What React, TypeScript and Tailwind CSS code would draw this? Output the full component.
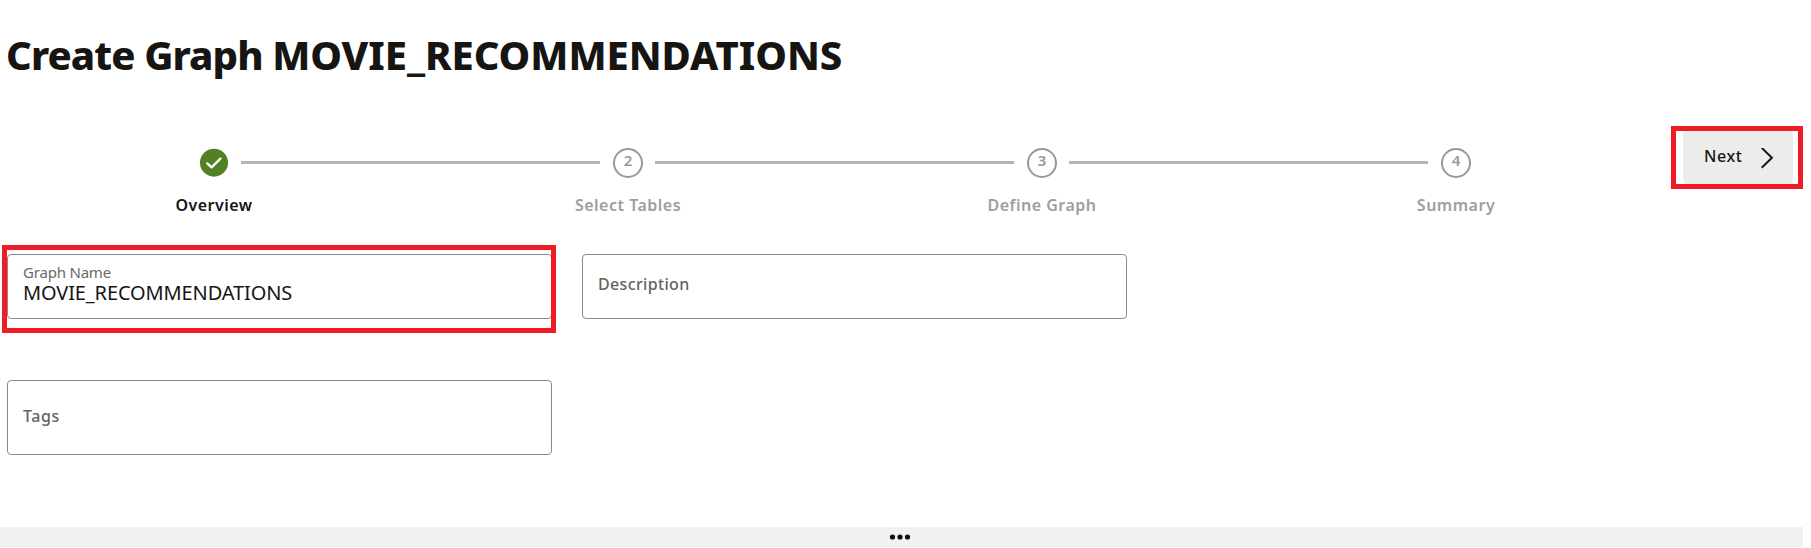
import { Fragment } from 'react';

const steps = ['Overview', 'Select Tables', 'Define Graph', 'Summary'];

function CheckBadge() {
  return (
    <svg viewBox="0 0 30 30" className="size-[30px] shrink-0">
      <circle cx="15" cy="14.7" r="14" fill="#508223" />
      <path
        d="M8.3 15.4 L12.6 19.3 L21.4 10.7"
        fill="none"
        stroke="#ffffff"
        strokeWidth="2.4"
        strokeLinecap="round"
        strokeLinejoin="round"
      />
    </svg>
  );
}

function StepTrain() {
  return (
    <div className="w-[1656px] shrink-0">
      <div className="flex items-start pl-48">
        {steps.map((step, i) => (
          <Fragment key={step}>
            {i > 0 && <div className="mt-[13px] mr-[13px] ml-3 h-[3px] w-[359px] bg-[#b5b4b3]" />}
            {i === 0 ? (
              <CheckBadge />
            ) : (
              <div className="size-[30px] shrink-0 rounded-full border-2 border-[#9b9998] text-center text-[15px] leading-5 font-semibold text-[#9b9998]">
                {i + 1}
              </div>
            )}
          </Fragment>
        ))}
      </div>
      <div className="mt-[15px] grid grid-cols-4 text-center text-base leading-6 font-semibold tracking-[0.5px]">
        {steps.map((step, i) => (
          <span key={step} className={i === 0 ? 'text-[#161513]' : 'text-[#9f9e9c]'}>
            {step}
          </span>
        ))}
      </div>
    </div>
  );
}

export default function App() {
  return (
    <div className="flex h-[548px] w-[1811px] flex-col overflow-hidden bg-white font-['Noto_Sans',sans-serif] text-[#161513]">
      <h1 className="pt-[31px] pl-1.5 text-[40px] leading-[48px] font-extrabold tracking-[-0.9px] whitespace-nowrap">
        Create Graph <span className="tracking-[-0.05px]">MOVIE_RECOMMENDATIONS</span>
      </h1>

      <div className="flex h-[175px] items-start pt-[52px] pl-[7px]">
        <div className="pt-[17px]">
          <StepTrain />
        </div>
        <div className="relative ml-5">
          <button className="flex h-[53px] w-[110px] items-start rounded bg-[#ececea] pt-[13px] pl-[21px] text-base leading-6 font-medium tracking-[0.6px]">
            <span>Next</span>
            <svg viewBox="0 0 14 24" className="mt-1 ml-[17px] h-6 w-3.5" fill="none" stroke="#161513" strokeWidth="2">
              <path d="M1.7 -0.1 L11.9 9.8 L1.7 19.7" />
            </svg>
          </button>
          <div className="absolute -top-[5px] -left-3 h-[63px] w-[132px] border-[5px] border-[#ee1c25]" />
        </div>
      </div>

      <div className="flex gap-[30px] pl-[7px]">
        <div className="relative">
          <div className="h-[65px] w-[545px] rounded border border-[#8b8988] pt-[7px] pl-[15px]">
            <label className="block text-[15px] leading-5 tracking-[-0.2px] text-[#6b6967]">Graph Name</label>
            <div className="text-xl leading-[22px] tracking-[-0.12px]">MOVIE_RECOMMENDATIONS</div>
          </div>
          <div className="absolute -top-[9px] -left-[5px] h-[88px] w-[554px] border-[5px] border-[#ee1c25]" />
        </div>
        <div className="h-[65px] w-[545px] rounded border border-[#8b8988] pt-[17px] pl-[15px] text-base leading-6 font-medium tracking-[0.35px] text-[#65635f]">
          Description
        </div>
      </div>

      <div className="mt-[61px] ml-[7px] h-[75px] w-[545px] rounded border border-[#8b8988] pt-[23px] pl-[15px] text-base leading-6 font-medium tracking-[0.6px] text-[#65635f]">
        Tags
      </div>

      <div className="mt-[72px] flex h-5 w-[1803px] items-center justify-center bg-[#f1f1f1]">
        <svg viewBox="0 0 23 6" className="mr-0.5 h-1.5 w-[23px]" fill="#100f0e">
          <circle cx="3.5" cy="3" r="2.6" />
          <circle cx="11" cy="3" r="2.6" />
          <circle cx="18.5" cy="3" r="2.6" />
        </svg>
      </div>
    </div>
  );
}
